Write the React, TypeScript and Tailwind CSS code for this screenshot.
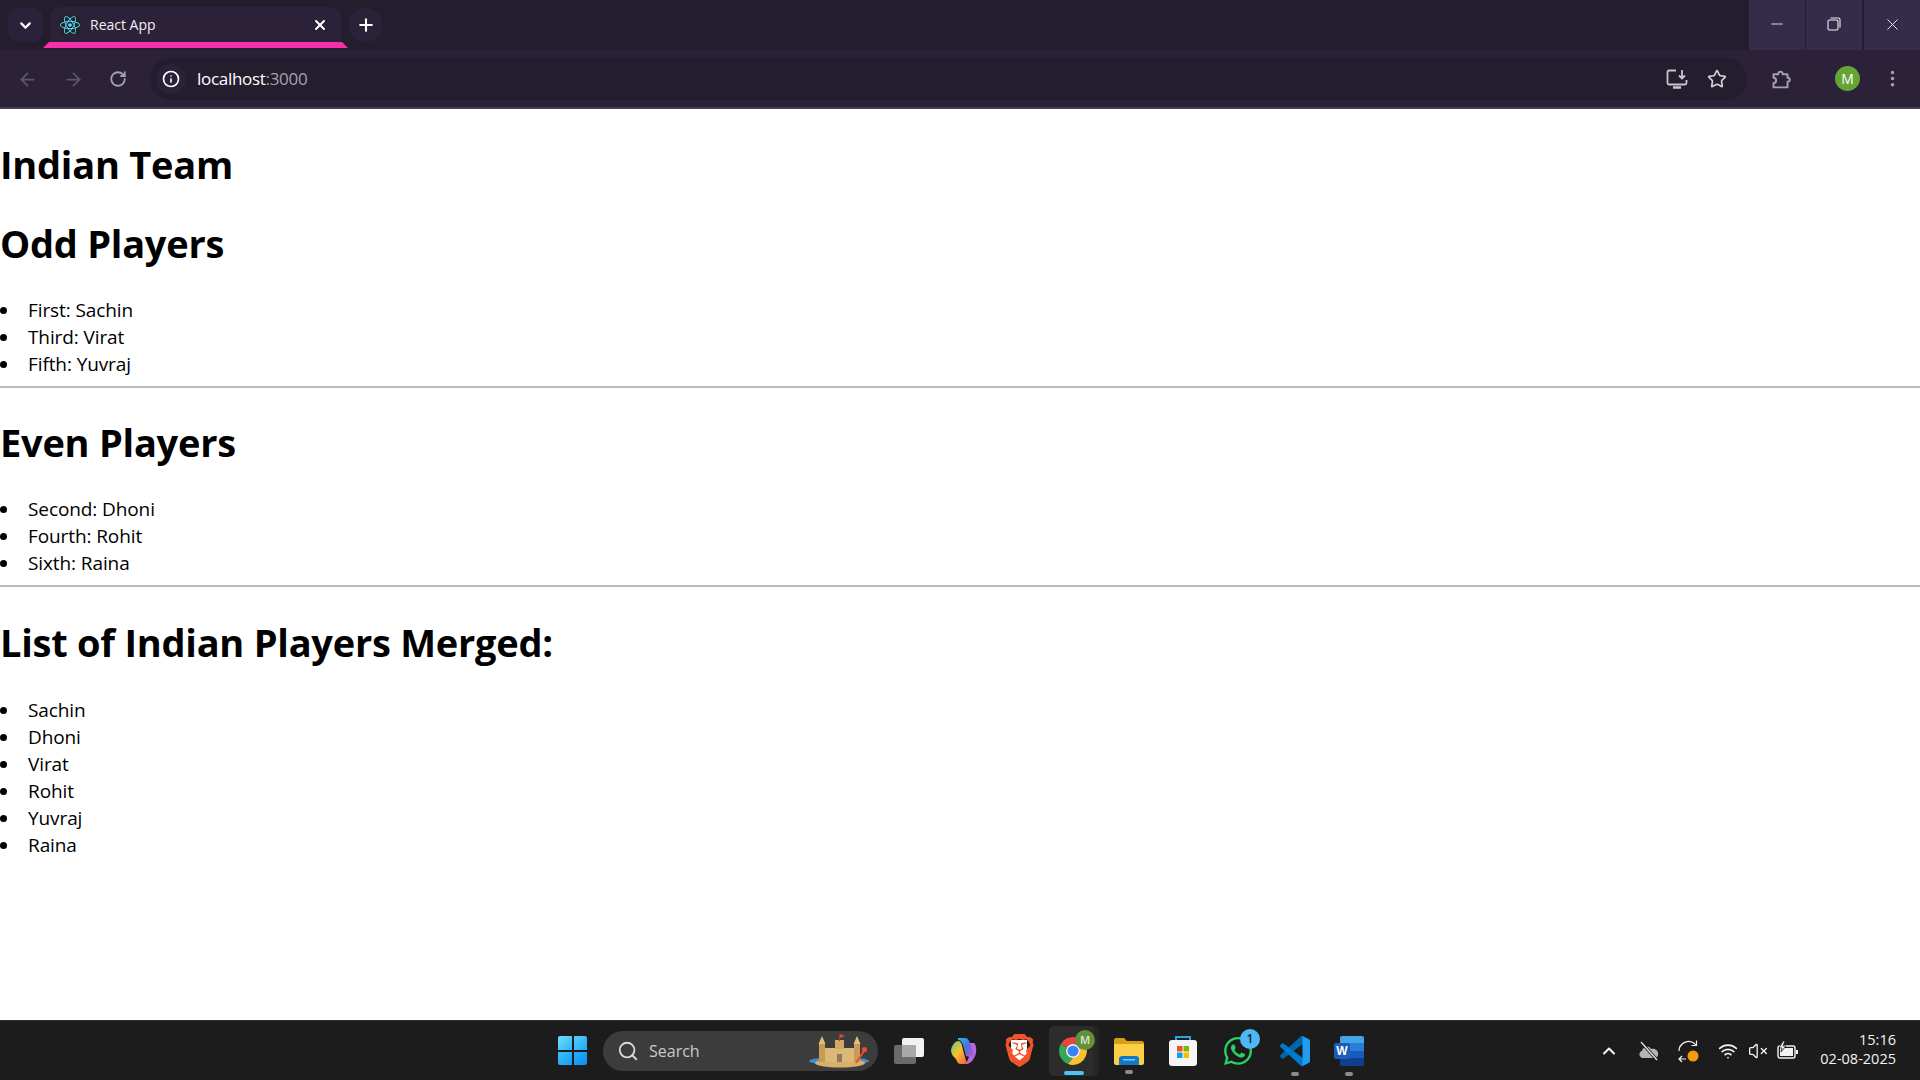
import { ArrowLeft, ArrowRight, ChevronDown, ChevronUp, EllipsisVertical, Info, Minus, Plus, RotateCw, Search, Star, VolumeX, Wifi, X } from 'lucide-react';
import { FaReact, FaWhatsapp } from 'react-icons/fa';
import { SiBrave } from 'react-icons/si';

const oddPlayers = ['First: Sachin', 'Third: Virat', 'Fifth: Yuvraj'];
const evenPlayers = ['Second: Dhoni', 'Fourth: Rohit', 'Sixth: Raina'];
const mergedPlayers = ['Sachin', 'Dhoni', 'Virat', 'Rohit', 'Yuvraj', 'Raina'];

function PlayerList({ items }: { items: string[] }) {
  return (
    <ul className="text-[19px] leading-[27px] tracking-[-0.1px] mb-[8px]">
      {items.map((item) => (
        <li key={item} className="flex items-center">
          <span className="w-[7px] h-[7px] rounded-full bg-black mr-[21px]" />
          {item}
        </li>
      ))}
    </ul>
  );
}

function Heading({ children }: { children: string }) {
  return <h2 className="text-[38px] leading-[54px] font-bold tracking-[-0.25px]">{children}</h2>;
}

function StartLogo() {
  return (
    <div className="grid grid-cols-2 gap-[2px] w-[29px] h-[29px]">
      <div className="bg-gradient-to-br from-[#6fdcff] to-[#2cb5f7] rounded-tl-[2px]" />
      <div className="bg-gradient-to-br from-[#52d0ff] to-[#1fa8f5] rounded-tr-[2px]" />
      <div className="bg-gradient-to-br from-[#3ac0fb] to-[#159cf3] rounded-bl-[2px]" />
      <div className="bg-gradient-to-br from-[#28aefa] to-[#0a8df0] rounded-br-[2px]" />
    </div>
  );
}

function SandCastle() {
  return (
    <svg width="62" height="34" viewBox="0 0 62 34">
      <ellipse cx="31" cy="27" rx="30" ry="4" fill="#3f8fd0" />
      <ellipse cx="32" cy="29" rx="25" ry="4.5" fill="#d9b06a" />
      <rect x="11" y="9" width="6" height="19" fill="#c99a55" />
      <path d="M14 2 L10.5 10 H17.5 Z" fill="#e2bd7c" />
      <rect x="46" y="9" width="6" height="19" fill="#c99a55" />
      <path d="M49 2 L45.5 10 H52.5 Z" fill="#e2bd7c" />
      <path d="M17 14 H46 V28 H17 Z" fill="#dcb877" />
      <rect x="27" y="6" width="9" height="9" fill="#d2a863" />
      <rect x="31" y="0" width="1" height="7" fill="#a33" />
      <path d="M32 0 L37 2 L32 4 Z" fill="#e04a30" />
      <rect x="29" y="20" width="5" height="8" fill="#8f7666" />
      <path d="M48 29 L56 17" stroke="#e8502c" strokeWidth="2" />
      <circle cx="56.5" cy="15.5" r="2.6" fill="#e8502c" />
    </svg>
  );
}

function TaskViewIcon() {
  return (
    <svg width="32" height="28" viewBox="0 0 32 28">
      <rect x="1" y="8" width="22" height="19" rx="2" fill="#6b6b6b" />
      <rect x="9" y="1" width="22" height="19" rx="2" fill="#f2f2f2" />
      <rect x="9" y="8" width="14" height="12" fill="#a9a9a9" />
    </svg>
  );
}

function CopilotIcon() {
  return (
    <svg width="30" height="30" viewBox="0 0 30 30">
      <defs>
        <linearGradient id="copilotA" x1="0" y1="0" x2="1" y2="1">
          <stop offset="0" stopColor="#2fb6e9" />
          <stop offset="0.5" stopColor="#4a6fe0" />
          <stop offset="1" stopColor="#c655c9" />
        </linearGradient>
        <linearGradient id="copilotB" x1="0" y1="0" x2="1" y2="1">
          <stop offset="0" stopColor="#58c98a" />
          <stop offset="0.45" stopColor="#f7c12f" />
          <stop offset="1" stopColor="#f0503c" />
        </linearGradient>
      </defs>
      <path d="M19 7 H26 C29 9 29 18 26 22 C24 26 21 28 17 28 C21 24 22 18 21 14 Z" fill="#b868dc" />
      <path d="M10 2 H17 C20 2 21 4 22 7 L26 19 C24 21 21 21 18 20 L15 9 C14 6 13 4 10 4 Z" fill="url(#copilotA)" />
      <path d="M21 28 H13 C10 28 9 26 8 23 L5 20 C3 17 2 13 5 9 C6 7 8 5 11 5 C13 6 14 8 14 10 L17 21 C18 25 19 27 21 28 Z" fill="url(#copilotB)" />
    </svg>
  );
}

function ChromeIcon() {
  return (
    <svg width="30" height="30" viewBox="0 0 30 30">
      <path d="M15 1 A14 14 0 0 1 27.1 8 H15 A7 7 0 0 0 8.9 11.5 L2.9 8 A14 14 0 0 1 15 1 Z" fill="#e8453c" />
      <path d="M2.9 8 L8.9 11.5 A7 7 0 0 0 15 22 L10 28 A14 14 0 0 1 2.9 8 Z" fill="#34a853" />
      <path d="M27.1 8 A14 14 0 0 1 10 28 L15 22 A7 7 0 0 0 21 11.5 Z" fill="#fbc02d" />
      <circle cx="15" cy="15" r="7" fill="#fff" />
      <circle cx="15" cy="15" r="5.6" fill="#3b82f6" />
    </svg>
  );
}

function FolderIcon() {
  return (
    <svg width="32" height="28" viewBox="0 0 32 28">
      <path d="M1 3 C1 2 2 1 3 1 H11 L14 4 H29 C30 4 31 5 31 6 V9 H1 Z" fill="#d99f12" />
      <path d="M1 7 H31 V26 C31 27 30 28 29 28 H3 C2 28 1 27 1 26 Z" fill="#fccf47" />
      <path d="M6 28 V22 C6 20 7 19 9 19 H23 C25 19 26 20 26 22 V28 Z" fill="#1478c8" />
      <rect x="10" y="22" width="12" height="1.5" fill="#7cc7f5" />
    </svg>
  );
}

function StoreIcon() {
  return (
    <svg width="30" height="32" viewBox="0 0 30 32">
      <path d="M8 6 V2 H22 V6" fill="none" stroke="#22a7e8" strokeWidth="2" />
      <rect x="1" y="5" width="28" height="26" rx="3" fill="#f5f5f5" />
      <rect x="9" y="11" width="5.5" height="5.5" fill="#f25022" />
      <rect x="15.5" y="11" width="5.5" height="5.5" fill="#7fba00" />
      <rect x="9" y="17.5" width="5.5" height="5.5" fill="#00a4ef" />
      <rect x="15.5" y="17.5" width="5.5" height="5.5" fill="#ffb900" />
    </svg>
  );
}

function VsCodeIcon() {
  return (
    <svg width="30" height="30" viewBox="0 0 100 100">
      <path d="M96.461 10.796L75.857.876a6.23 6.23 0 0 0-7.107 1.207l-67.451 61.5a4.167 4.167 0 0 0 .004 6.162l5.51 5.009a4.167 4.167 0 0 0 5.32.236l81.228-61.62c2.725-2.067 6.639-.124 6.639 3.297v-.24a6.25 6.25 0 0 0-3.539-5.63z" fill="#0065a9" />
      <path d="M96.461 89.204l-20.604 9.92a6.23 6.23 0 0 1-7.107-1.207l-67.451-61.5a4.167 4.167 0 0 1 .004-6.162l5.51-5.009a4.167 4.167 0 0 1 5.32-.236l81.228 61.62c2.725 2.067 6.639.124 6.639-3.297v.24a6.25 6.25 0 0 1-3.539 5.63z" fill="#007acc" />
      <path d="M75.858 99.126a6.232 6.232 0 0 1-7.108-1.21c2.306 2.307 6.25.674 6.25-2.588V4.672c0-3.262-3.944-4.895-6.25-2.589a6.232 6.232 0 0 1 7.108-1.21l20.6 9.908A6.25 6.25 0 0 1 100 16.413v67.174a6.25 6.25 0 0 1-3.541 5.633l-20.601 9.906z" fill="#1f9cf0" />
    </svg>
  );
}

function WordIcon() {
  return (
    <div className="relative w-[30px] h-[30px]">
      <div className="absolute right-0 top-0 w-[24px] h-[30px] rounded-[2px] bg-[linear-gradient(#41a5ee_0_25%,#2b7cd3_25%_50%,#185abd_50%_75%,#103f91_75%)]" />
      <span className="absolute left-0 top-[7px] w-[16px] h-[16px] bg-[#1a5cb8] rounded-[2px] text-white text-[12px] leading-[16px] font-bold text-center font-['Liberation_Sans',sans-serif]">W</span>
    </div>
  );
}

function ScreenDownloadIcon() {
  return (
    <svg width="22" height="20" viewBox="0 0 22 20" fill="none" stroke="#c7c4cc" strokeWidth="1.8">
      <path d="M10 1.5 H3 C2 1.5 1.5 2 1.5 3 V14 C1.5 15 2 15.5 3 15.5 H19 C20 15.5 20.5 15 20.5 14 V11" />
      <path d="M7 18.5 H15" strokeWidth="2.5" />
      <path d="M16 1 V9 M13 6.5 L16 9.5 L19 6.5" />
    </svg>
  );
}

function ExtensionIcon() {
  return (
    <svg width="21" height="21" viewBox="0 0 24 24" fill="none" stroke="#a5a2ab" strokeWidth="2.2" strokeLinejoin="round">
      <path d="M4 6 H9.5 C9.5 2 14.5 2 14.5 6 H20 V10 C23.5 10 23.5 14.5 20 14.5 V21 H4 V16 C8 16 8 10 4 10 Z" />
    </svg>
  );
}

function CloudSlashIcon() {
  return (
    <svg width="22" height="20" viewBox="0 0 22 20">
      <path d="M5 17 C1 17 0 11 4 10 C5 5 11 4 13 8 C17 7 21 10 20 14 C20 16 18 17 16 17 Z" fill="#b4b4b4" />
      <path d="M3 1 L19 19" stroke="#1c1c1c" strokeWidth="3" />
      <path d="M3 1 L19 19" stroke="#f0f0f0" strokeWidth="1.2" />
    </svg>
  );
}

function SyncIcon() {
  return (
    <svg width="24" height="24" viewBox="0 0 24 24" fill="none" stroke="#f2f2f2" strokeWidth="1.2">
      <path d="M2 12 C2 5 9 1 15 3 C17 4 18 5 19 6" />
      <path d="M19.5 1.5 V6.5 H14.5" />
      <path d="M2 20 H9 M5 17 L2 20 L5 23" />
      <circle cx="16" cy="17" r="5.5" fill="#f59a0f" stroke="none" />
    </svg>
  );
}

function BatteryIcon() {
  return (
    <svg width="22" height="20" viewBox="0 0 22 20">
      <rect x="1" y="5" width="17" height="12" rx="2" fill="none" stroke="#f2f2f2" strokeWidth="1.4" />
      <rect x="3" y="7" width="13" height="8" fill="#f2f2f2" />
      <rect x="19" y="9" width="2" height="4" fill="#f2f2f2" />
      <path d="M6 0 L2 7 H5 L4 11 L9 5 H6 L8 0 Z" fill="#f2f2f2" stroke="#1c1c1c" strokeWidth="0.8" />
    </svg>
  );
}

function BrowserChrome() {
  return (
    <header className="shrink-0 font-['Inter',sans-serif]">
      <div className="h-[50px] bg-[#241d2e] flex items-start">
        <div className="ml-[8px] mt-[8px] w-[35px] h-[34px] rounded-[10px] bg-[#2b2239] flex items-center justify-center text-white">
          <ChevronDown size={17} strokeWidth={3} />
        </div>
        <div className="ml-[7px] mt-[7px] w-[291px] h-[41px] relative">
          <div className="h-[35px] bg-[#2b2239] rounded-t-[11px] flex items-center pl-[10px] pr-[13px]">
            <div className="w-[20px] h-[20px] bg-[#20232a] rounded-[2px] flex items-center justify-center text-[#61dafb]">
              <FaReact size={20} />
            </div>
            <span className="ml-[10px] text-[14px] text-[#f0eef2] font-['Open_Sans',sans-serif] flex-1">React App</span>
            <X size={16} strokeWidth={3} className="text-white" />
          </div>
          <div className="absolute -left-[7px] -right-[7px] top-[35px] h-[6px] bg-[#f72fa9] [clip-path:polygon(6px_0,calc(100%-6px)_0,100%_100%,0_100%)]" />
        </div>
        <div className="ml-[7px] mt-[8px] w-[35px] h-[34px] rounded-full bg-[#2b2239] flex items-center justify-center text-white">
          <Plus size={20} strokeWidth={2.5} />
        </div>
        <div className="ml-auto flex h-full text-[#f0eef2]">
          <div className="w-[56px] bg-[#352b4a] flex items-center justify-center pb-[3px]"><Minus size={18} strokeWidth={1.2} /></div>
          <div className="ml-[1px] w-[56px] bg-[#352b4a] flex items-center justify-center pb-[2px]">
            <svg width="14" height="14" viewBox="0 0 14 14" fill="none" stroke="currentColor" strokeWidth="1.1">
              <rect x="1" y="3" width="10" height="10" rx="1.5" />
              <path d="M3.5 1 H11.5 C12.5 1 13 1.5 13 2.5 V10.5" />
            </svg>
          </div>
          <div className="ml-[2px] w-[56px] bg-[#352b4a] flex items-center justify-center pb-[2px]"><X size={19} strokeWidth={1.2} /></div>
        </div>
      </div>
      <div className="h-[59px] bg-[#2b2239] border-b-[2px] border-[#463c52] flex items-start">
        <div className="flex items-center h-[42px] mt-[8px] ml-[17px] gap-[25px]">
          <ArrowLeft size={21} className="text-[#5e5968]" />
          <ArrowRight size={21} className="text-[#5e5968]" />
          <RotateCw size={18} strokeWidth={2.4} className="text-[#a5a2ab]" />
        </div>
        <div className="ml-[23px] mt-[8px] w-[1597px] h-[42px] rounded-full bg-[#241d2e] flex items-center pl-[6px] pr-[20px]">
          <div className="w-[30px] h-[30px] rounded-full bg-[#2b2239] flex items-center justify-center text-white">
            <Info size={18} strokeWidth={2.2} />
          </div>
          <span className="ml-[11px] text-[17px] text-white font-['Open_Sans',sans-serif] tracking-[-0.3px]">
            localhost<span className="text-[#a5a2ab]">:3000</span>
          </span>
          <div className="ml-auto flex items-center gap-[19px]">
            <ScreenDownloadIcon />
            <Star size={20} strokeWidth={2} className="text-[#d2d0d6]" />
          </div>
        </div>
        <div className="mt-[8px] h-[42px] flex items-center">
          <div className="ml-[23px]"><ExtensionIcon /></div>
          <div className="ml-[44px] mb-[2px] w-[25px] h-[25px] rounded-full bg-[#67a436] text-white text-[14px] leading-[25px] text-center font-['Open_Sans',sans-serif]">M</div>
          <EllipsisVertical size={21} className="ml-[22px] mb-[2px] text-[#a5a2ab]" />
        </div>
      </div>
    </header>
  );
}

function Taskbar() {
  return (
    <footer className="shrink-0 h-[60px] bg-[#1c1c1c] border-t border-[#333] flex items-center text-white font-['Open_Sans',sans-serif]">
      <div className="ml-[558px] flex items-center">
        <StartLogo />
        <div className="ml-[16px] w-[275px] h-[40px] rounded-full bg-[#3c3c3c] flex items-center pl-[14px] pr-[8px]">
          <Search size={22} strokeWidth={2} className="text-[#d8d8d8]" />
          <span className="ml-[10px] text-[16px] text-[#c9c9c9]">Search</span>
          <div className="ml-auto"><SandCastle /></div>
        </div>
        <div className="ml-[15px]"><TaskViewIcon /></div>
        <div className="ml-[23px]"><CopilotIcon /></div>
        <div className="ml-[28px] w-[26px] h-[32px] flex items-center justify-center relative">
          <div className="absolute inset-[5px] bg-white" />
          <SiBrave size={33} className="relative shrink-0 text-[#f1532a]" />
        </div>
        <div className="ml-[17px] relative w-[48px] h-[50px] rounded-[5px] bg-[#2c2c2c] flex items-center justify-center">
          <span className="absolute -right-[2px] top-0 bottom-0 w-[6px] rounded-r-[5px] bg-[#262626]" />
          <div className="relative"><ChromeIcon /></div>
          <span className="absolute right-[2px] top-[4px] w-[20px] h-[20px] rounded-full bg-[#62913a] text-[#dfe8d4] text-[11px] leading-[20px] text-center font-semibold">M</span>
          <span className="absolute bottom-[1px] left-[15px] w-[20px] h-[4px] rounded-full bg-[#4fc3f7]" />
        </div>
        <div className="ml-[16px] relative flex justify-center">
          <FolderIcon />
          <span className="absolute -bottom-[9px] w-[8px] h-[4px] rounded-full bg-[#8c8c8c]" />
        </div>
        <div className="ml-[23px]"><StoreIcon /></div>
        <div className="ml-[24px] relative">
          <FaWhatsapp size={32} className="text-[#25d366]" />
          <span className="absolute -top-[6px] -right-[6px] w-[20px] h-[20px] rounded-full bg-[#4db8f5] text-[#10212c] text-[12px] leading-[20px] text-center font-semibold">1</span>
        </div>
        <div className="ml-[26px] relative flex justify-center">
          <VsCodeIcon />
          <span className="absolute -bottom-[10px] w-[8px] h-[4px] rounded-full bg-[#8c8c8c]" />
        </div>
        <div className="ml-[24px] relative flex justify-center">
          <WordIcon />
          <span className="absolute -bottom-[10px] w-[8px] h-[4px] rounded-full bg-[#8c8c8c]" />
        </div>
      </div>
      <div className="ml-auto flex items-center text-[#f2f2f2]">
        <ChevronUp size={20} strokeWidth={2.5} />
        <div className="ml-[19px]"><CloudSlashIcon /></div>
        <div className="ml-[17px]"><SyncIcon /></div>
        <Wifi size={20} strokeWidth={2} className="ml-[17px]" />
        <VolumeX size={20} strokeWidth={1.6} className="ml-[10px]" />
        <div className="ml-[9px]"><BatteryIcon /></div>
        <div className="ml-[21px] mr-[24px] mb-[3px] text-right text-[14.5px] leading-[19px]">
          <div>15:16</div>
          <div>02-08-2025</div>
        </div>
      </div>
    </footer>
  );
}

export default function App() {
  return (
    <div className="w-full h-screen flex flex-col overflow-hidden bg-white text-black">
      <BrowserChrome />
      <main className="flex-1 font-['Open_Sans',sans-serif] pt-[28px]">
        <Heading>Indian Team</Heading>
        <div className="mt-[25px]" />
        <Heading>Odd Players</Heading>
        <div className="mt-[27px]" />
        <PlayerList items={oddPlayers} />
        <hr className="border-t-[2px] border-[#bbb]" />
        <div className="mt-[27px]" />
        <Heading>Even Players</Heading>
        <div className="mt-[27px]" />
        <PlayerList items={evenPlayers} />
        <hr className="border-t-[2px] border-[#bbb]" />
        <div className="mt-[28px]" />
        <Heading>List of Indian Players Merged:</Heading>
        <div className="mt-[28px]" />
        <PlayerList items={mergedPlayers} />
      </main>
      <Taskbar />
    </div>
  );
}
